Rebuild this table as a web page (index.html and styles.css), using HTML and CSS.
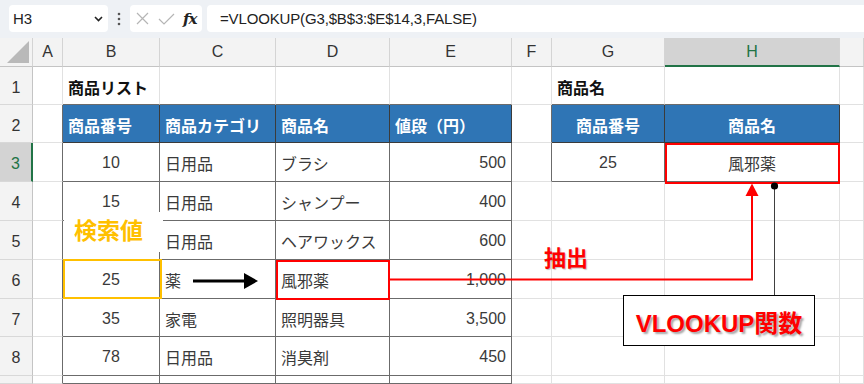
FILE: index.html
```html
<!DOCTYPE html>
<html lang="ja">
<head>
    <meta charset="UTF-8">
    <title>VLOOKUP</title>
    <link rel="stylesheet" href="styles.css">
</head>
<body>
<div class="page">
    <!-- Formula bar -->
    <div class="bar">
        <div class="namebox">
            <span>H3</span>
            <svg class="chev" width="9" height="6" viewBox="0 0 9 6"><path d="M1 1 L4.5 4.5 L8 1" fill="none" stroke="#222" stroke-width="1.6"/></svg>
        </div>
        <svg class="grip" width="4" height="14" viewBox="0 0 4 14"><circle cx="2" cy="2" r="1.3" fill="#555"/><circle cx="2" cy="7" r="1.3" fill="#555"/><circle cx="2" cy="12" r="1.3" fill="#555"/></svg>
        <div class="fxbox">
            <svg width="13" height="13" viewBox="0 0 13 13"><path d="M1 1 L12 12 M12 1 L1 12" stroke="#b5b5b5" stroke-width="1.2"/></svg>
            <svg width="17" height="12" viewBox="0 0 17 12"><path d="M1 6 L6 11 L16 1" fill="none" stroke="#b5b5b5" stroke-width="1.2"/></svg>
            <i class="fx">fx</i>
        </div>
        <div class="formula">=VLOOKUP(G3,$B$3:$E$14,3,FALSE)</div>
    </div>

    <!-- Worksheet -->
    <table class="sheet">
        <colgroup>
            <col style="width:33px"><col style="width:30px"><col style="width:97px"><col style="width:116px">
            <col style="width:114px"><col style="width:122px"><col style="width:40px"><col style="width:113px">
            <col style="width:175px"><col style="width:24px">
        </colgroup>
        <tr class="cols">
            <th class="corner"><span class="tri"></span></th>
            <th>A</th><th>B</th><th>C</th><th>D</th><th>E</th><th>F</th><th>G</th><th class="sel">H</th><th></th>
        </tr>
        <tr class="r38">
            <th class="rh">1</th>
            <td></td>
            <td class="title eb">商品リスト</td><td class="eb"></td><td class="eb"></td><td class="eb"></td>
            <td></td>
            <td class="title eb">商品名</td><td class="eb"></td><td></td>
        </tr>
        <tr class="r38">
            <th class="rh">2</th>
            <td class="er"></td>
            <td class="tc hd">商品番号</td><td class="tc hd">商品カテゴリ</td><td class="tc hd">商品名</td><td class="tc hd">値段（円）</td>
            <td class="er"></td>
            <td class="tc hd ctr">商品番号</td><td class="tc hd ctr">商品名</td><td></td>
        </tr>
        <tr class="r39">
            <th class="rh sel">3</th>
            <td class="er"></td>
            <td class="tc ctr">10</td><td class="tc">日用品</td><td class="tc">ブラシ</td><td class="tc num">500</td>
            <td class="er"></td>
            <td class="tc ctr">25</td><td class="tc ctr">風邪薬</td><td></td>
        </tr>
        <tr class="r39">
            <th class="rh">4</th>
            <td class="er"></td>
            <td class="tc ctr">15</td><td class="tc">日用品</td><td class="tc">シャンプー</td><td class="tc num">400</td>
            <td></td><td></td><td></td><td></td>
        </tr>
        <tr class="r39">
            <th class="rh">5</th>
            <td class="er"></td>
            <td class="tc ctr"></td><td class="tc">日用品</td><td class="tc">ヘアワックス</td><td class="tc num">600</td>
            <td></td><td></td><td></td><td></td>
        </tr>
        <tr class="r39">
            <th class="rh">6</th>
            <td class="er"></td>
            <td class="tc ctr">25</td><td class="tc">薬</td><td class="tc">風邪薬</td><td class="tc num">1,000</td>
            <td></td><td></td><td></td><td></td>
        </tr>
        <tr class="r38">
            <th class="rh">7</th>
            <td class="er"></td>
            <td class="tc ctr">35</td><td class="tc">家電</td><td class="tc">照明器具</td><td class="tc num">3,500</td>
            <td></td><td></td><td></td><td></td>
        </tr>
        <tr class="r39">
            <th class="rh">8</th>
            <td class="er"></td>
            <td class="tc ctr">78</td><td class="tc">日用品</td><td class="tc">消臭剤</td><td class="tc num">450</td>
            <td></td><td></td><td></td><td></td>
        </tr>
        <tr class="tail">
            <th class="rh"></th>
            <td class="er"></td>
            <td class="tc"></td><td class="tc"></td><td class="tc"></td><td class="tc"></td>
            <td></td><td></td><td></td><td></td>
        </tr>
    </table>

    <!-- Annotations drawn over the sheet -->
    <div class="hit">
        <span>検索値</span>
    </div>
    <div class="box orange key"></div>
    <div class="box red found"></div>
    <div class="box red result"></div>

    <svg class="marks" width="864" height="384" viewBox="0 0 864 384">
        <path d="M390 279.5 H752 V195" fill="none" stroke="#ff0000" stroke-width="2"/>
        <polygon points="745.5,196 758.5,196 752,183.5" fill="#ff0000"/>
        <path d="M193 281 H246" stroke="#000" stroke-width="3"/>
        <polygon points="244,273 258,281 244,289" fill="#000"/>
        <path d="M774.5 186 V295" stroke="#404040" stroke-width="1"/>
        <circle cx="774.5" cy="186" r="3.6" fill="#000"/>
    </svg>

    <div class="pull">抽出</div>
    <div class="callout">VLOOKUP関数</div>
</div>
</body>
</html>
```

FILE: styles.css
```css
* {
    box-sizing: border-box;
    margin: 0;
    padding: 0;
}

body {
    width: 864px;
    height: 384px;
    overflow: hidden;
    background: #fff;
    font-family: "Liberation Sans", "Noto Sans CJK JP", sans-serif;
    color: #333;
}

.page {
    position: relative;
    width: 864px;
    height: 384px;
    overflow: hidden;
}

/* formula bar */
.bar {
    height: 38px;
    background: #eef1f5;
    display: flex;
    align-items: center;
    padding: 0 0 1px 9px;
}

.namebox {
    width: 99px;
    height: 27px;
    background: #fff;
    border-radius: 4px;
    display: flex;
    align-items: center;
    justify-content: space-between;
    padding: 0 5px 0 4px;
    font-size: 15px;
    color: #222;
}

.grip {
    margin: 0 9px;
}

.fxbox {
    width: 72px;
    height: 27px;
    background: #fff;
    border-radius: 4px;
    display: flex;
    align-items: center;
    padding: 0 5px 0 6px;
    gap: 9px;
}

.fx {
    font-family: "DejaVu Serif", "Liberation Serif", serif;
    font-size: 15px;
    font-weight: bold;
    color: #222;
    margin-left: -1px;
    letter-spacing: -1px;
}

.formula {
    flex: 1;
    height: 27px;
    margin-left: 5px;
    background: #fff;
    border-radius: 4px 0 0 4px;
    display: flex;
    align-items: center;
    padding-left: 13px;
    font-size: 15px;
    letter-spacing: -0.15px;
    color: #222;
}

/* worksheet */
.sheet {
    width: 864px;
    table-layout: fixed;
    border-spacing: 0;
    font-size: 16px;
}

.sheet td {
    border-right: 1px solid #e1e1e1;
    border-bottom: 1px solid #e1e1e1;
    padding: 2px 5px 0;
    white-space: nowrap;
    overflow: hidden;
    color: #3a3a3a;
}

.cols {
    height: 29px;
}

.cols th {
    background: #f3f3f3;
    border-right: 1px solid #d4d4d4;
    border-bottom: 1px solid #c4c4c4;
    font-weight: normal;
    font-size: 16px;
    color: #333;
}

.cols th.sel {
    background: #d3d3d3;
    color: #217346;
    border-bottom: 2px solid #217346;
}

.corner {
    position: relative;
}

.tri {
    position: absolute;
    right: 3px;
    bottom: 3px;
    width: 0;
    height: 0;
    border-left: 22px solid transparent;
    border-bottom: 22px solid #b9b9b9;
}

.r38 { height: 38px; }
.r39 { height: 39px; }
.tail { height: 8px; }

.rh {
    background: #f3f3f3;
    border-right: 1px solid #c4c4c4;
    border-bottom: 1px solid #d8d8d8;
    font-weight: normal;
    font-size: 16px;
    color: #333;
    padding-top: 4px;
}

.rh.sel {
    background: #d3d3d3;
    color: #217346;
    border-right: 2px solid #217346;
}

.sheet td.tc {
    border-right-color: #6b6b6b;
    border-bottom-color: #6b6b6b;
}

.sheet td.er { border-right-color: #6b6b6b; }
.sheet td.eb { border-bottom-color: #6b6b6b; }

.sheet td.hd {
    background: #2f75b5;
    color: #fff;
    font-weight: bold;
    border-right-color: #3b3b3b;
    border-bottom-color: #3b3b3b;
}

.sheet td.title {
    font-weight: bold;
    color: #111;
    overflow: visible;
}

.ctr { text-align: center; }
.num { text-align: right; }

/* annotations */
.hit {
    position: absolute;
    left: 64px;
    top: 212px;
    width: 99px;
    height: 40px;
    background: #fff;
    padding: 1px 0 0 10px;
    font-size: 23px;
    font-weight: bold;
    color: #ffc000;
    font-family: "Noto Sans CJK JP", sans-serif;
    line-height: 32px;
}

.box {
    position: absolute;
    border: 2.5px solid;
}

.orange { border-color: #ffc000; }
.red { border-color: #ff0000; }

.key { left: 63px; top: 259px; width: 99px; height: 40px; }
.found { left: 276px; top: 260px; width: 114px; height: 40px; }
.result { left: 665px; top: 143px; width: 175px; height: 41px; }

.marks {
    position: absolute;
    left: 0;
    top: 0;
}

.pull {
    position: absolute;
    left: 544px;
    top: 240px;
    font-size: 22px;
    font-weight: bold;
    color: #ff0000;
    font-family: "Noto Sans CJK JP", sans-serif;
    line-height: 32px;
    text-shadow: 1px 1px 1px rgba(0,0,0,0.25);
}

.callout {
    position: absolute;
    left: 623px;
    top: 295px;
    width: 192px;
    height: 51px;
    background: #fff;
    border: 1px solid #000;
    display: flex;
    align-items: center;
    justify-content: center;
    padding-top: 2px;
    font-size: 24px;
    font-weight: bold;
    color: #ff0000;
    text-shadow: 2px 2px 2px rgba(0,0,0,0.35);
}
```
